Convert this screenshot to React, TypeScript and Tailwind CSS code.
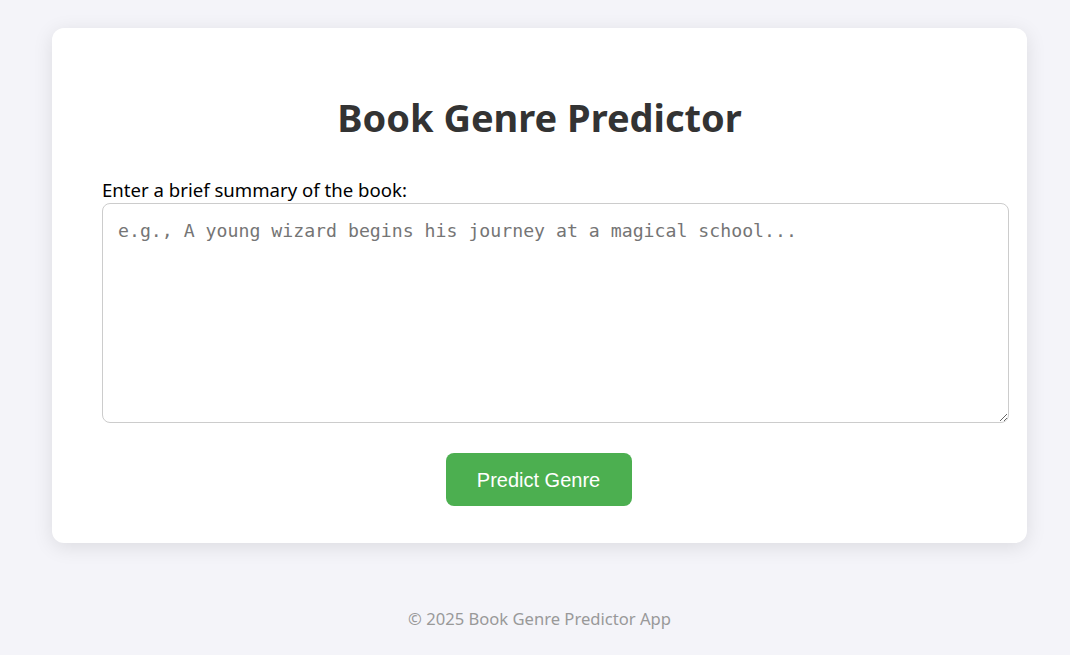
export default function App() {
  return (
    <div className="min-h-[655px] bg-[#f4f4f9] pl-[52px] pt-[28px] font-['Noto_Sans',sans-serif]">
      {/* card */}
      <div className="w-[975px] rounded-[12px] bg-white px-[50px] pt-[65px] pb-[37px] shadow-[0_4px_20px_rgba(0,0,0,0.1)]">
        <h1 className="text-center text-[38px] leading-[48px] font-bold text-[#333]">
          Book Genre Predictor
        </h1>

        <label htmlFor="summary" className="mt-[37px] block text-[18.6px] leading-[24px] text-black">
          Enter a brief summary of the book:
        </label>
        <textarea
          id="summary"
          className="mt-px box-content block h-[188px] w-full rounded-[8px] border border-[#ccc] px-[15px] pt-[13px] pb-[17px] font-['DejaVu_Sans_Mono',monospace] text-[18.2px] text-[#333] placeholder:text-[#757575] outline-none"
          placeholder="e.g., A young wizard begins his journey at a magical school..."
        />

        <div className="mt-[30px] flex justify-center">
          <button className="-ml-[2px] h-[53px] w-[186px] rounded-[8px] bg-[#4caf50] font-['Liberation_Sans',sans-serif] text-[20px] text-white">
            Predict Genre
          </button>
        </div>
      </div>

      {/* footer */}
      <p className="mt-[64px] w-[975px] text-center text-[16.6px] text-[#999]">
        © 2025 Book Genre Predictor App
      </p>
    </div>
  );
}
